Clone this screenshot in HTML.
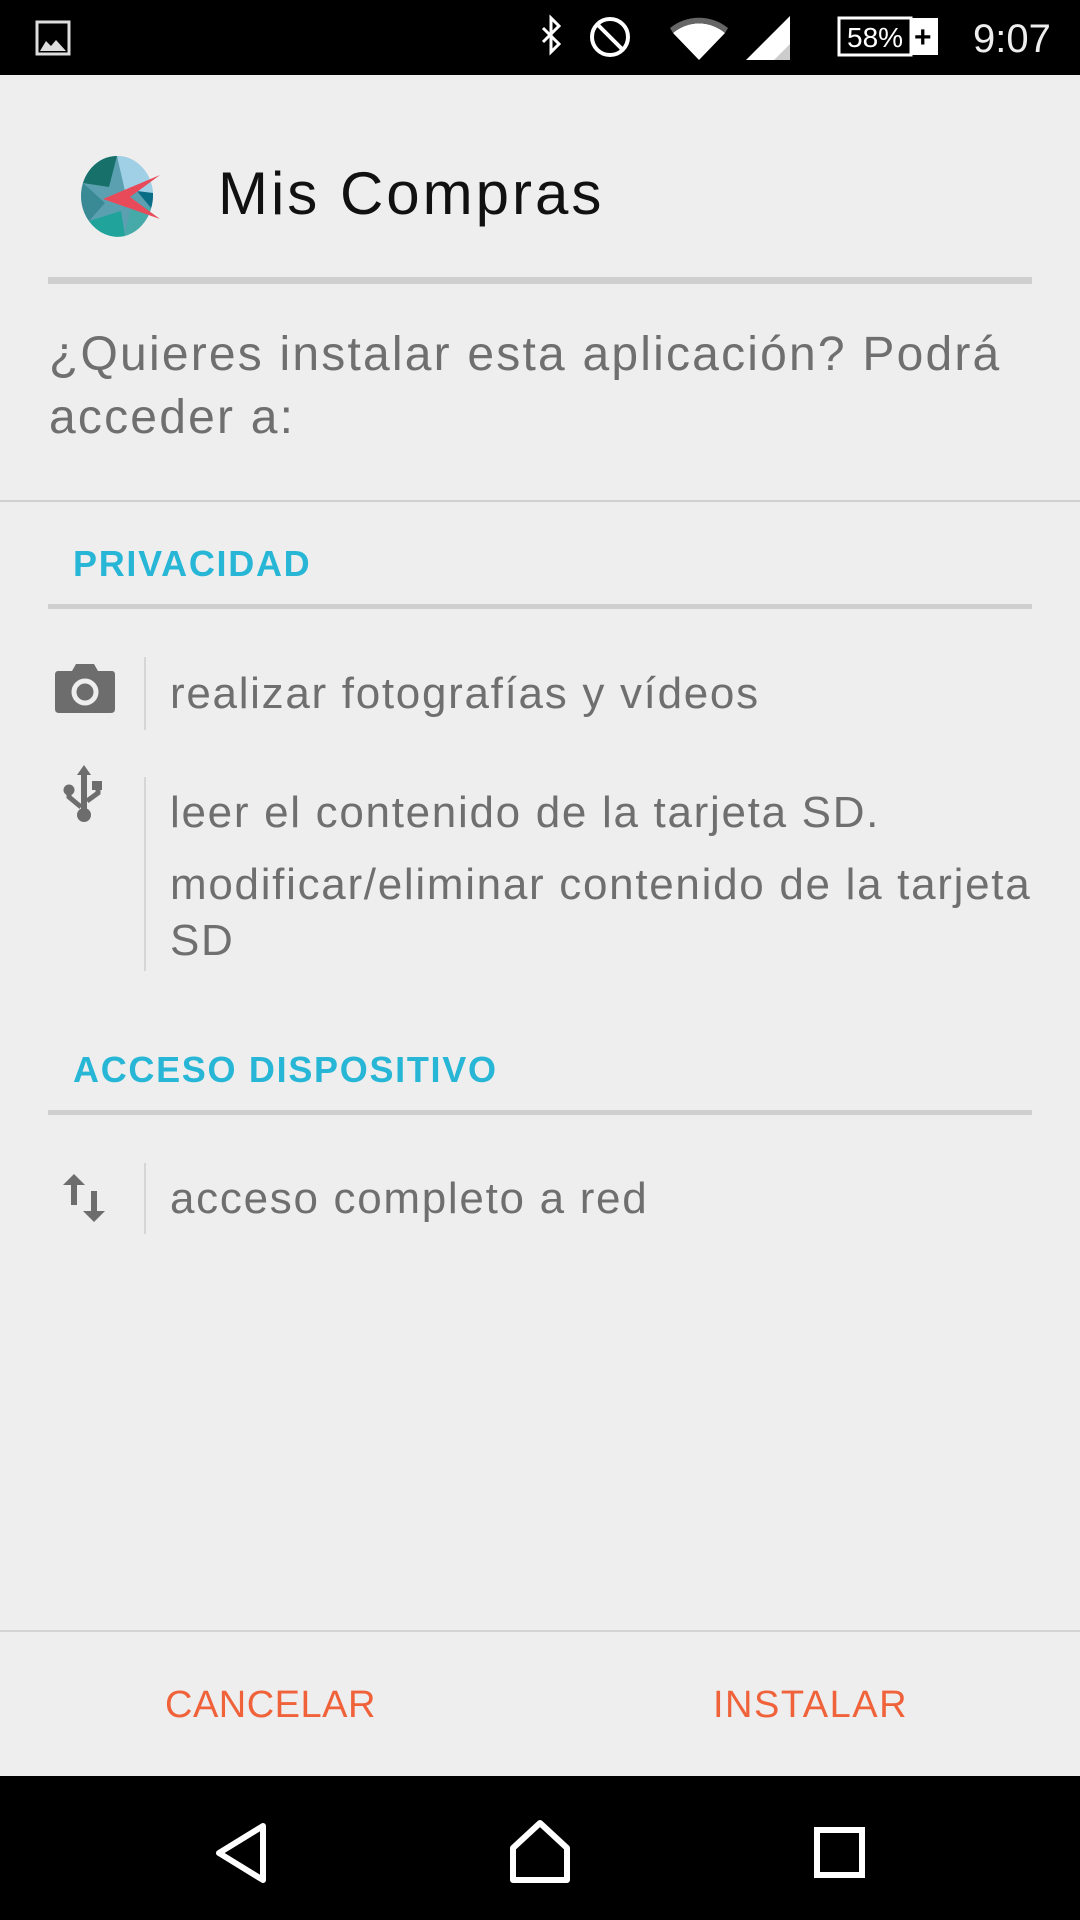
<!DOCTYPE html>
<html><head><meta charset="utf-8"><style>
*{margin:0;padding:0;box-sizing:border-box}
body{width:1080px;height:1920px;background:#eeeeee;font-family:"Liberation Sans",sans-serif;position:relative;overflow:hidden}
.a{position:absolute;white-space:nowrap}
.t{color:#6f6f6f;font-size:44px;line-height:1;letter-spacing:1.7px}
.h{color:#27b6d5;font-weight:bold;font-size:36px;line-height:1;letter-spacing:1.7px}
.div{position:absolute;left:48px;width:984px;height:5px;background:#cfcfcf}
.vl{position:absolute;left:144px;width:2px;background:#d6d6d6}
.btn{color:#f0623a;font-size:38px;line-height:1;letter-spacing:0.5px}
</style></head><body>
<div class="a" style="left:0;top:0;width:1080px;height:75px;background:#000"></div>
<svg class="a" style="left:0;top:0" width="1080" height="75">
<rect x="37" y="22" width="32" height="32" fill="none" stroke="#ddd" stroke-width="3"/>
<path d="M40 51 L46 41 L51 46 L56 40 L66 51 Z" fill="#ddd"/>
<path d="M543 28 L559 44 L551 52 L551 18 L559 26 L543 42" fill="none" stroke="#fff" stroke-width="3"/>
<circle cx="610" cy="37" r="18" fill="none" stroke="#fff" stroke-width="4"/>
<path d="M598 25 L622 49" stroke="#fff" stroke-width="4"/>
<path d="M673 33 A40 40 0 0 1 725 33 L699 60 Z" fill="#fff"/>
<path d="M725 33 A40 40 0 0 0 673 33 L670 28 A46 46 0 0 1 728 28 Z" fill="#666"/>
<path d="M746 60 L790 16 L790 60 Z" fill="#fff"/>
<path d="M774 60 L790 44 L790 60Z" fill="#ccc"/>
<rect x="839" y="18" width="72" height="37" fill="none" stroke="#fff" stroke-width="3"/>
<rect x="912" y="18" width="26" height="37" fill="#fff"/>
<text x="847" y="47" fill="#fff" font-size="28" font-family="Liberation Sans">58%</text>
<text x="914" y="47" fill="#000" font-size="30" font-family="Liberation Sans" font-weight="bold">+</text>
<text x="973" y="52" fill="#eee" font-size="40" font-family="Liberation Sans">9:07</text>
</svg>
<svg class="a" style="left:75px;top:153px" width="90" height="86" viewBox="0 0 90 86">
<ellipse cx="42" cy="43" rx="36" ry="40" fill="#5aa0b0"/>
<path d="M42 3 A36 40 0 0 1 78 40 L50 38 Z" fill="#9fd0e6"/>
<path d="M42 3 A36 40 0 0 0 8 30 L34 34 Z" fill="#18706a"/>
<path d="M8 30 A36 40 0 0 0 14 68 L30 50 Z" fill="#3a8a95"/>
<path d="M14 68 A36 40 0 0 0 50 83 L46 58 Z" fill="#1fa39a"/>
<path d="M50 83 A36 40 0 0 0 76 55 L56 52 Z" fill="#45aaa8"/>
<path d="M78 40 A36 40 0 0 1 76 55 L62 38Z" fill="#0a6d86"/>
<path d="M85 22 L28 46 L85 66 L55 44 Z" fill="#e84a5a"/>
</svg>
<div class="a" style="left:218px;top:164px;font-size:60px;color:#111;line-height:1;letter-spacing:3px">Mis Compras</div>
<div class="div" style="top:277px;height:7px"></div>
<div class="a" style="left:49px;top:323px;font-size:48px;color:#6f6f6f;line-height:63px;white-space:normal;width:1020px;letter-spacing:2.2px">¿Quieres instalar esta aplicación? Podrá acceder a:</div>
<div class="a" style="left:0;top:500px;width:1080px;height:2px;background:#d0d0d0"></div>
<div class="a h" style="left:73px;top:546px">PRIVACIDAD</div>
<div class="div" style="top:604px"></div>
<svg class="a" style="left:54px;top:663px" width="62" height="50" viewBox="0 0 62 50">
<path d="M4 8 H18 L22 1 H40 L44 8 H58 Q61 8 61 12 V46 Q61 50 57 50 H5 Q1 50 1 46 V12 Q1 8 4 8Z" fill="#6d6d6d"/>
<circle cx="31" cy="29" r="11" fill="none" stroke="#eee" stroke-width="5"/>
</svg>
<div class="vl" style="top:657px;height:73px"></div>
<div class="a t" style="left:170px;top:672px">realizar fotografías y vídeos</div>
<svg class="a" style="left:60px;top:764px" width="48" height="60" viewBox="0 0 48 60">
<path d="M24 1 L31 11 H17 Z" fill="#6d6d6d"/>
<rect x="21" y="10" width="6" height="40" fill="#6d6d6d"/>
<path d="M21 43 L9 33 V27" stroke="#6d6d6d" stroke-width="5" fill="none"/>
<path d="M27 37 L38 29 V22" stroke="#6d6d6d" stroke-width="5" fill="none"/>
<circle cx="9" cy="26" r="5.5" fill="#6d6d6d"/>
<rect x="32" y="17" width="10" height="9" fill="#6d6d6d"/>
<circle cx="24" cy="51" r="7" fill="#6d6d6d"/>
</svg>
<div class="vl" style="top:777px;height:194px"></div>
<div class="a t" style="left:170px;top:791px">leer el contenido de la tarjeta SD.</div>
<div class="a t" style="left:170px;top:863px">modificar/eliminar contenido de la tarjeta</div>
<div class="a t" style="left:170px;top:919px">SD</div>
<div class="a h" style="left:73px;top:1052px">ACCESO DISPOSITIVO</div>
<div class="div" style="top:1110px"></div>
<svg class="a" style="left:62px;top:1173px" width="44" height="50" viewBox="0 0 44 50">
<path d="M12 1 L23 12 H15 V32 H9 V12 H1 Z" fill="#6d6d6d"/>
<path d="M32 49 L43 38 H35 V18 H29 V38 H21 Z" fill="#6d6d6d"/>
</svg>
<div class="vl" style="top:1163px;height:71px"></div>
<div class="a t" style="left:170px;top:1177px">acceso completo a red</div>
<div class="a" style="left:0;top:1630px;width:1080px;height:2px;background:#d4d4d4"></div>
<div class="a btn" style="left:165px;top:1686px">CANCELAR</div>
<div class="a btn" style="left:713px;top:1686px;letter-spacing:1.5px">INSTALAR</div>
<div class="a" style="left:0;top:1776px;width:1080px;height:144px;background:#000"></div>
<svg class="a" style="left:0;top:1776px" width="1080" height="144">
<path d="M263 50 L219 77 L263 104 Z" fill="none" stroke="#fff" stroke-width="6" stroke-linejoin="round"/>
<path d="M513 72 L540 47 L567 72 V104 H513 Z" fill="none" stroke="#fff" stroke-width="6" stroke-linejoin="round"/>
<rect x="817" y="54" width="45" height="45" fill="none" stroke="#fff" stroke-width="6"/>
</svg>
</body></html>
